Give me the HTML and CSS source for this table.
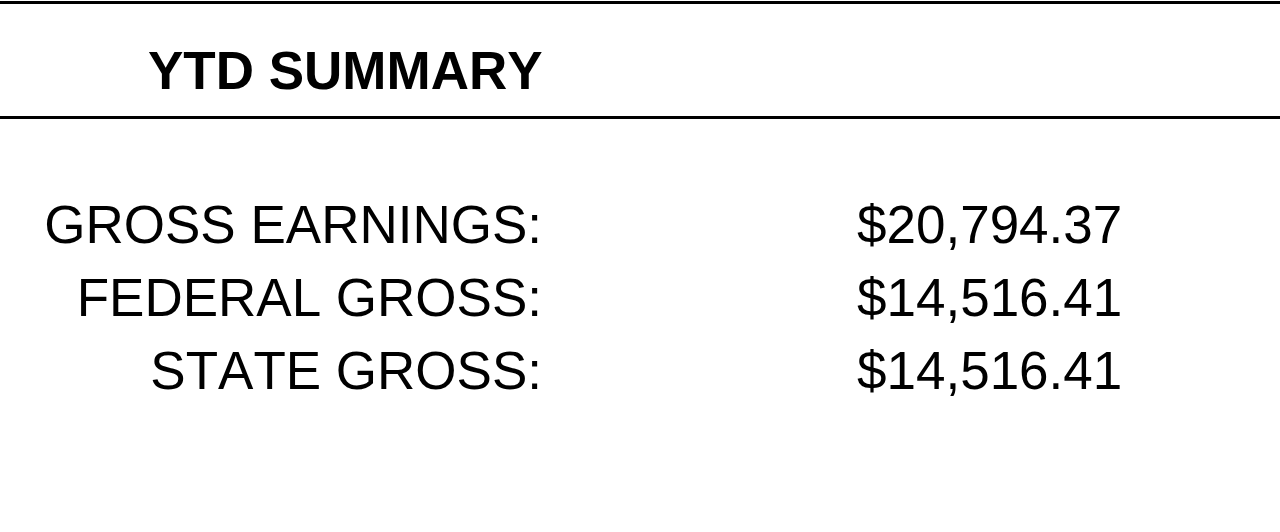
FILE: index.html
```html
<!DOCTYPE html>
<html>
<head>
<meta charset="utf-8">
<link rel="stylesheet" href="styles.css">
</head>
<body>
<div class="page">
  <div class="header">
    <h1 class="title">YTD SUMMARY</h1>
  </div>
  <div class="summary">
    <div class="label">GROSS EARNINGS:</div>
    <div class="value">$20,794.37</div>
    <div class="label">FEDERAL GROSS:</div>
    <div class="value">$14,516.41</div>
    <div class="label">STATE GROSS:</div>
    <div class="value">$14,516.41</div>
  </div>
</div>
</body>
</html>
```
FILE: styles.css
```css
html, body {
  margin: 0;
  padding: 0;
  background: #fff;
}
body {
  font-family: "Liberation Sans", Arial, sans-serif;
  font-kerning: none;
  color: #000;
  width: 1280px;
  height: 532px;
  overflow: hidden;
}
.page {
  padding-top: 1px;
}
.header {
  border-top: 3px solid #000;
  border-bottom: 3px solid #000;
  padding: 40px 0 19px 148px;
}
.title {
  margin: 0;
  font-size: 53px;
  line-height: 53px;
  font-weight: bold;
}
.summary {
  display: grid;
  grid-template-columns: 542px auto;
  column-gap: 315px;
  margin-top: 69px;
  font-size: 53px;
  line-height: 73px;
}
.label {
  text-align: right;
}
.value {
  text-align: left;
}
```
